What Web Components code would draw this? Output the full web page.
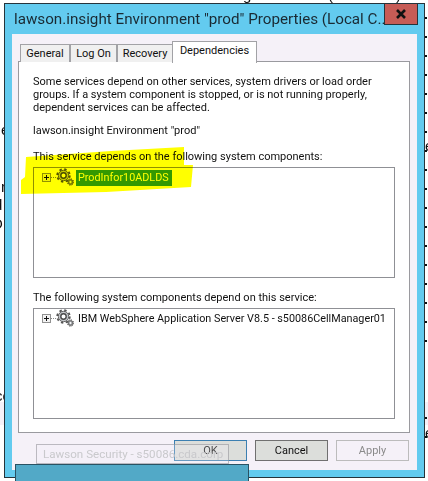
<!DOCTYPE html>
<html>
<head>
<meta charset="utf-8">
<style>
  html, body { margin: 0; padding: 0; background: #fff; }
  body { width: 428px; height: 481px; overflow: hidden; position: relative; font-family: Roboto, "Liberation Sans", sans-serif; }
</style>
</head>
<body>
<desk-backdrop></desk-backdrop>
<dlg-window title-text="lawson.insight Environment &quot;prod&quot; Properties (Local C...">
  <tab-strip>
    <dlg-tab style="width:50px">General</dlg-tab>
    <dlg-tab style="width:47px">Log On</dlg-tab>
    <dlg-tab style="width:56px">Recovery</dlg-tab>
    <dlg-tab style="width:85px" active>Dependencies</dlg-tab>
  </tab-strip>
  <dep-panel></dep-panel>
  <button-row>
    <dlg-button kind="focus">OK</dlg-button>
    <dlg-button>Cancel</dlg-button>
    <dlg-button kind="off">Apply</dlg-button>
  </button-row>
</dlg-window>
<drag-ghost></drag-ghost>
<script>
const gearSvg = `
  <svg width="18" height="18" viewBox="0 0 18 18">
    <circle cx="7.500" cy="7.500" r="5.200" fill="#c3c6ca" stroke="#666" stroke-width="1"/>
    <circle cx="7.500" cy="7.500" r="6.300" fill="none" stroke="#555" stroke-width="1.800" stroke-dasharray="2.400 2.550"/>
    <circle cx="7.500" cy="7.500" r="2.700" fill="#fff" stroke="#4a4a4a" stroke-width="1.400"/>
    <circle cx="14.500" cy="14" r="2.400" fill="#9a9da1" stroke="#666" stroke-width="1"/>
    <circle cx="14.500" cy="14" r="3.200" fill="none" stroke="#555" stroke-width="1" stroke-dasharray="1.300 1.200"/>
    <circle cx="14.500" cy="14" r=".9" fill="#fff"/>
  </svg>`;

class DeskBackdrop extends HTMLElement {
  constructor() {
    super();
    this.attachShadow({ mode: 'open' });
    this.shadowRoot.innerHTML = `
      <style>
        :host { position: absolute; inset: 0; display: block; overflow: hidden; font: 15px "Liberation Sans", sans-serif; color: #111; }
        span { position: absolute; line-height: 16px; }
        .band { position: absolute; top: 402px; height: 23px; background: #f5f1f8; }
        .dots { position: absolute; left: 425px; top: 17px; width: 2px; height: 340px;
          background: repeating-linear-gradient(#111 0 2px, transparent 2px 19px); }
        .dots2 { top: 417px; height: 30px; }
      </style>
      <div class="band" style="left:0;width:4px"></div>
      <div class="band" style="left:425px;width:3px"></div>
      <div class="dots"></div>
      <div class="dots dots2"></div>
      <span style="left:1px;top:122px">e</span>
      <span style="left:1px;top:179px">r</span>
      <span style="left:-6px;top:197px">d</span>
      <span style="left:-8px;top:216px">D</span>
      <span style="left:-5px;top:388px">co</span>
      <span style="left:425px;top:138px">e</span>
      <span style="left:425px;top:425px">e</span>
      <span style="left:243px;top:-13px">g</span>
      <span style="left:328px;top:-13px">(</span>
      <span style="left:396px;top:-13px">)</span>`;
  }
}
customElements.define('desk-backdrop', DeskBackdrop);

class DlgWindow extends HTMLElement {
  constructor() {
    super();
    this.attachShadow({ mode: 'open' });
    this.shadowRoot.innerHTML = `
      <style>
        :host { position: absolute; left: 4px; top: 3px; width: 421px; height: 475px; box-sizing: border-box;
          display: flex; flex-direction: column; background: #63cbef; border: 1px solid #26343b; }
        .bar { height: 30px; flex: none; display: flex; justify-content: space-between; align-items: flex-start; }
        .title { padding: 3px 0 0 9px; min-width: 0; font: 15.200px/24px Roboto, sans-serif; color: #1a2a33; white-space: nowrap; }
        .close { flex: none; width: 34px; height: 21px; margin-right: 6px; box-sizing: border-box; background: #c75c56;
          border: 1px solid #26343b; border-top: 0; display: flex; align-items: center; justify-content: center; }
        .client { flex: 1; margin: 0 7px 7px 7px; background: #f5f1f8; display: flex; flex-direction: column; padding: 7px 7px 0 6px; }
      </style>
      <div class="bar">
        <div class="title"></div>
        <div class="close"><svg width="12" height="10" viewBox="0 0 12 10"><path d="M2 1l8 8M10 1L2 9" stroke="#111" stroke-width="2.600" fill="none"/></svg></div>
      </div>
      <div class="client"><slot></slot></div>`;
  }
  connectedCallback() {
    this.shadowRoot.querySelector('.title').textContent = this.getAttribute('title-text');
  }
}
customElements.define('dlg-window', DlgWindow);

class TabStrip extends HTMLElement {
  constructor() {
    super();
    this.attachShadow({ mode: 'open' });
    this.shadowRoot.innerHTML = `
      <style>
        :host { display: flex; align-items: flex-end; height: 21px; padding-left: 2px; position: relative; z-index: 1; margin-bottom: -1px; }
      </style>
      <slot></slot>`;
  }
}
customElements.define('tab-strip', TabStrip);

class DlgTab extends HTMLElement {
  constructor() {
    super();
    this.attachShadow({ mode: 'open' });
    this.shadowRoot.innerHTML = `
      <style>
        :host { display: block; box-sizing: border-box; height: 18px; text-align: center;
          border: 1px solid #a2a2a6; border-bottom: 0; background: #f0f0f0; color: #111;
          font: 11px/17px Roboto, sans-serif; white-space: nowrap; }
        :host([active]) { height: 22px; margin-left: -1px; margin-bottom: -1px; background: #fff; line-height: 18px; }
      </style>
      <slot></slot>`;
  }
}
customElements.define('dlg-tab', DlgTab);

class TreeList extends HTMLElement {
  constructor() {
    super();
    this.attachShadow({ mode: 'open' });
    this.shadowRoot.innerHTML = `
      <style>
        :host { display: block; box-sizing: border-box; width: 362px; border: 1px solid #8f9095; background: #fff; padding: 1px 0 0 8px; }
        .row { display: flex; align-items: center; height: 17px; }
        .plus { width: 9px; height: 9px; box-sizing: border-box; border: 1px solid #919191; flex: none; position: relative; background: #f2f2f2; }
        .plus::before { content: ''; position: absolute; left: 1px; top: 3px; width: 5px; height: 1px; background: #111; }
        .plus::after { content: ''; position: absolute; left: 3px; top: 1px; width: 1px; height: 5px; background: #111; }
        .dots { width: 5px; height: 1px; flex: none; background: repeating-linear-gradient(90deg, #888 0 1px, transparent 1px 2px); }
        svg { flex: none; margin-top: -1px; }
        .label { margin-left: 2px; padding: 0 3px 0 2px; height: 16px; font: 10.800px/16px Roboto, sans-serif; color: #111; white-space: nowrap; }
        :host([selected]) .label { background: #3399ff; color: #fff; }
      </style>
      <div class="row">
        <span class="plus"></span><span class="dots"></span>${gearSvg}<span class="label"><slot></slot></span>
      </div>`;
  }
}
customElements.define('tree-list', TreeList);

class DepPanel extends HTMLElement {
  constructor() {
    super();
    this.attachShadow({ mode: 'open' });
    this.shadowRoot.innerHTML = `
      <style>
        :host { display: block; box-sizing: border-box; height: 372px; position: relative; background: #fff; border: 1px solid #9a9a9f;
          padding: 13px 0 0 14px; font: 11px/13px Roboto, sans-serif; color: #111; }
        p { margin: 0; white-space: nowrap; }
        .svc { margin-top: 10px; }
        .lbl1 { margin-top: 13px; margin-bottom: 4px; }
        .lbl2 { margin-top: 13px; margin-bottom: 4px; }
        .one { height: 111px; }
        .two { height: 111px; }
        .mark { position: absolute; left: 2px; top: 85px; width: 173px; height: 48px; background: #ffff00; mix-blend-mode: multiply;
          clip-path: polygon(5px 10px, 90px 4px, 163px 0, 163px 18px, 172px 18px, 170px 40px, 85px 45px, 0 47px, 0 33px, 4px 30px); }
      </style>
      <p>Some services depend on other services, system drivers or load order<br>groups. If a system component is stopped, or is not running properly,<br>dependent services can be affected.</p>
      <p class="svc">lawson.insight Environment "prod"</p>
      <p class="lbl1">This service depends on the following system components:</p>
      <tree-list class="one" selected>ProdInfor10ADLDS</tree-list>
      <p class="lbl2">The following system components depend on this service:</p>
      <tree-list class="two">IBM WebSphere Application Server V8.5 - s50086CellManager01</tree-list>
      <div class="mark"></div>`;
  }
}
customElements.define('dep-panel', DepPanel);

class ButtonRow extends HTMLElement {
  constructor() {
    super();
    this.attachShadow({ mode: 'open' });
    this.shadowRoot.innerHTML = `
      <style>
        :host { display: flex; justify-content: flex-end; gap: 8px; padding: 7px 1px 0 0; }
      </style>
      <slot></slot>`;
  }
}
customElements.define('button-row', ButtonRow);

class DlgButton extends HTMLElement {
  constructor() {
    super();
    this.attachShadow({ mode: 'open' });
    this.shadowRoot.innerHTML = `
      <style>
        :host { display: block; box-sizing: border-box; width: 73px; height: 21px; border: 1px solid #707070; background: #dcdedb;
          color: #111; text-align: center; font: 11px/19px Roboto, sans-serif; }
        :host([kind="focus"]) { border-color: #3c7fb1; }
        :host([kind="off"]) { border-color: #bcbcbc; background: #f5f1f8; color: #8a8a8a; }
      </style>
      <slot></slot>`;
  }
}
customElements.define('dlg-button', DlgButton);

class DragGhost extends HTMLElement {
  constructor() {
    super();
    this.attachShadow({ mode: 'open' });
    this.shadowRoot.innerHTML = `
      <style>
        :host { position: absolute; left: 36px; top: 444px; width: 193px; height: 20px; box-sizing: border-box; display: block;
          border: 1px solid rgba(130,130,135,.5); background: rgba(245,241,248,.25); color: #c9c9cc;
          padding-left: 6px; font: 11.600px/18px Roboto, sans-serif; white-space: nowrap; }
        .bar { position: absolute; left: -22px; top: 19px; width: 234px; height: 30px; box-sizing: border-box;
          background: #52a9c7; border: 1px solid #2a5263; }
      </style>
      Lawson Security - s50086.cda.corp
      <div class="bar"></div>`;
  }
}
customElements.define('drag-ghost', DragGhost);
</script>
</body>
</html>
